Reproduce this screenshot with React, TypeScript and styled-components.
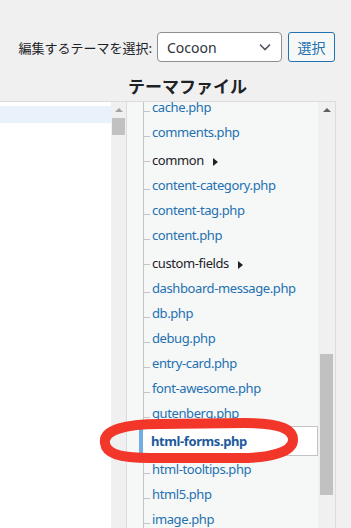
import React from 'react';
import styled, { createGlobalStyle, css } from 'styled-components';

const GlobalStyle = createGlobalStyle`
  html, body {
    margin: 0;
    padding: 0;
    background: #f0f0f1;
  }
  body {
    font-family: "Noto Sans", "Noto Sans CJK JP", sans-serif;
    color: #1d2327;
  }
`;

const Page = styled.div`
  position: relative;
  width: 351px;
  height: 528px;
  overflow: hidden;
  display: flex;
  flex-direction: column;
`;

const TopBar = styled.div`
  display: flex;
  justify-content: flex-end;
  align-items: center;
  height: 30px;
  margin-top: 32px;
  padding-right: 16px;
`;

const Label = styled.span`
  font-size: 13px;
  color: #1d2327;
  margin-right: 5px;
  font-family: "Noto Sans CJK JP", sans-serif;
`;

const Select = styled.div`
  box-sizing: border-box;
  width: 125px;
  height: 30px;
  border: 1px solid #8c8f94;
  border-radius: 4px;
  background: #fff;
  display: flex;
  align-items: center;
  justify-content: space-between;
  padding: 0 10px 0 9px;
  font-size: 14px;
  color: #2c3338;
`;

const Button = styled.button`
  box-sizing: border-box;
  margin-left: 6px;
  width: 47px;
  height: 30px;
  border: 1px solid #2271b1;
  border-radius: 3px;
  background: #f6f7f7;
  color: #2271b1;
  font-size: 14px;
  font-family: "Noto Sans CJK JP", sans-serif;
  padding: 0;
`;

const Heading = styled.h2`
  margin: 12px 0 3px 128px;
  font-size: 17px;
  line-height: 24px;
  font-weight: 700;
  color: #1d2327;
  font-family: "Noto Sans CJK JP", sans-serif;
`;

const Panels = styled.div`
  flex: 1;
  display: flex;
  min-height: 0;
`;

const LeftPanel = styled.div`
  width: 126px;
  border-top: 1px solid #dcdcde;
  display: flex;
  background: #fff;
`;

const LeftList = styled.div`
  flex: 1;
  padding-top: 4px;
`;

const LeftHighlight = styled.div`
  height: 17px;
  background: #e9f1fb;
`;

const Scrollbar = styled.div<{ $w: number }>`
  position: relative;
  width: ${p => p.$w}px;
  background: #f0f0f0;
  flex-shrink: 0;
`;

const ArrowUp = styled.div<{ $dark?: boolean }>`
  position: absolute;
  top: 6px;
  left: 50%;
  margin-left: -4px;
  width: 0;
  height: 0;
  border-left: 4px solid transparent;
  border-right: 4px solid transparent;
  border-bottom: 4px solid ${p => (p.$dark ? '#606060' : '#a3a3a3')};
`;

const Thumb = styled.div<{ $top: number; $h: number; $inset: number }>`
  position: absolute;
  left: ${p => p.$inset}px;
  right: ${p => p.$inset}px;
  top: ${p => p.$top}px;
  height: ${p => p.$h}px;
  background: #c1c1c1;
`;

const RightPanel = styled.div`
  width: 210px;
  box-sizing: border-box;
  border: 1px solid #dcdcde;
  border-bottom: none;
  background: #f6f7f7;
  display: flex;
  overflow: hidden;
`;

const TreeArea = styled.div`
  flex: 1;
  overflow: hidden;
`;

const Tree = styled.ul`
  list-style: none;
  margin: -7px 0 0 16px;
  padding: 0;
  border-left: 1px solid #c3c4c7;
`;

type Kind = 'file' | 'folder' | 'current';

const Row = styled.li<{ $kind: Kind }>`
  position: relative;
  box-sizing: border-box;
  height: 25px;
  line-height: 25px;
  padding-left: 8px;
  font-size: 13px;
  letter-spacing: -0.4px;
  white-space: nowrap;
  color: #2271b1;

  &::before {
    content: "";
    position: absolute;
    left: 0;
    top: 16px;
    width: 6px;
    border-top: 1px solid #c3c4c7;
  }

  ${p =>
    p.$kind === 'folder' &&
    css`
      height: 28px;
      padding-top: 3px;
      color: #1d2327;
    `}

  ${p =>
    p.$kind === 'current' &&
    css`
      height: 30px;
      line-height: 28px;
      margin: 0 0 1px -5px;
      padding-left: 8px;
      background: #fff;
      border: 1px solid #c3c4c7;
      border-left: 4px solid #72aee6;
      font-weight: 700;
      color: #1d5a9b;
      &::before {
        display: none;
      }
    `}
`;

const FolderArrow = styled.span`
  display: inline-block;
  margin-left: 9px;
  width: 0;
  height: 0;
  border-top: 4px solid transparent;
  border-bottom: 4px solid transparent;
  border-left: 5px solid #1d2327;
  vertical-align: -1px;
`;

const Scribble = styled.svg`
  position: absolute;
  left: 0;
  top: 0;
  pointer-events: none;
`;

const files: { name: string; kind: Kind }[] = [
  { name: 'cache.php', kind: 'file' },
  { name: 'comments.php', kind: 'file' },
  { name: 'common', kind: 'folder' },
  { name: 'content-category.php', kind: 'file' },
  { name: 'content-tag.php', kind: 'file' },
  { name: 'content.php', kind: 'file' },
  { name: 'custom-fields', kind: 'folder' },
  { name: 'dashboard-message.php', kind: 'file' },
  { name: 'db.php', kind: 'file' },
  { name: 'debug.php', kind: 'file' },
  { name: 'entry-card.php', kind: 'file' },
  { name: 'font-awesome.php', kind: 'file' },
  { name: 'gutenberg.php', kind: 'file' },
  { name: 'html-forms.php', kind: 'current' },
  { name: 'html-tooltips.php', kind: 'file' },
  { name: 'html5.php', kind: 'file' },
  { name: 'image.php', kind: 'file' },
];

const App = () => {
  return (
    <>
      <GlobalStyle />
      <Page>
        <TopBar>
          <Label>編集するテーマを選択:</Label>
          <Select>
            <span>Cocoon</span>
            <svg width="12" height="8" viewBox="0 0 12 8">
              <path d="M1 1.5 L6 6.5 L11 1.5" fill="none" stroke="#50575e" strokeWidth="1.6" />
            </svg>
          </Select>
          <Button>選択</Button>
        </TopBar>
        <Heading>テーマファイル</Heading>
        <Panels>
          <LeftPanel>
            <LeftList>
              <LeftHighlight />
            </LeftList>
            <Scrollbar $w={15}>
              <ArrowUp />
              <Thumb $top={16} $h={17} $inset={1} />
            </Scrollbar>
          </LeftPanel>
          <RightPanel>
            <TreeArea>
              <Tree>
                {files.map(f => (
                  <Row key={f.name} $kind={f.kind}>
                    {f.name}
                    {f.kind === 'folder' && <FolderArrow />}
                  </Row>
                ))}
              </Tree>
            </TreeArea>
            <Scrollbar $w={17}>
              <ArrowUp $dark />
              <Thumb $top={252} $h={141} $inset={2} />
            </Scrollbar>
          </RightPanel>
        </Panels>
        <Scribble width="351" height="528" viewBox="0 0 351 528">
          <path
            d="M105 443 C103 430 125 424 160 424 L245 423 C282 423 293 430 293 440 C293 452 270 458 240 458 L150 458 C118 458 106 453 105 443 Z"
            fill="none"
            stroke="#f2372a"
            strokeWidth="10"
            strokeLinejoin="round"
          />
        </Scribble>
      </Page>
    </>
  );
};

export default App;
